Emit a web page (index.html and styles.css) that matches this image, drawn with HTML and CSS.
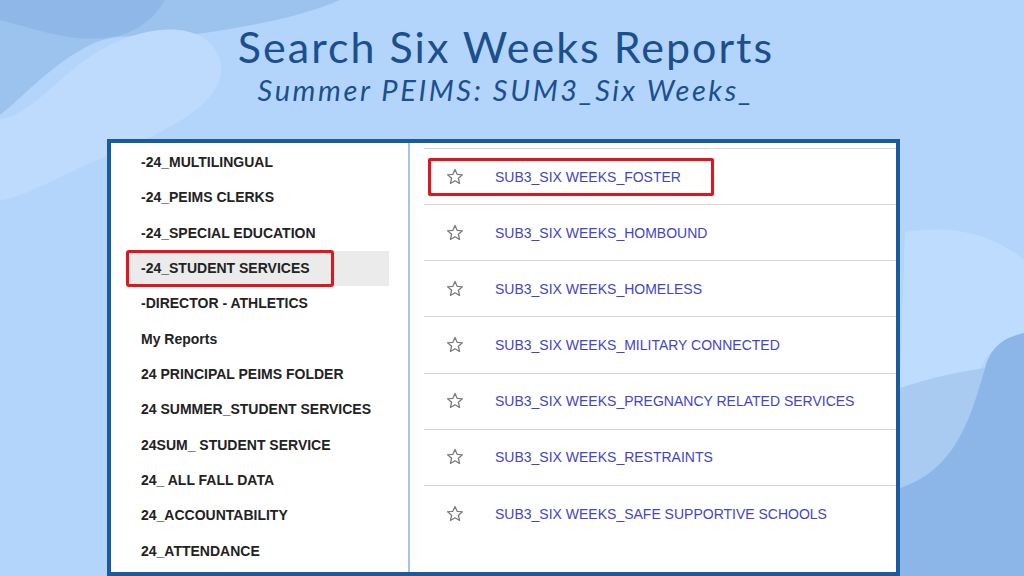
FILE: index.html
```html
<!DOCTYPE html>
<html>
<head>
<meta charset="utf-8">
<link rel="stylesheet" href="styles.css">
</head>
<body>
<div class="slide">
  <svg class="bg" viewBox="0 0 1024 576" preserveAspectRatio="none" aria-hidden="true">
    <rect width="1024" height="576" fill="#b4d5fb"/>
    <path d="M0 0 H340 C300 18 240 28 190 35 C150 40 120 30 90 45 C50 65 20 100 0 115 Z" fill="#9cc2ee"/>
    <path d="M0 0 H165 C150 25 130 35 105 38 C70 42 40 30 0 20 Z" fill="#8fb8e8"/>
    <path d="M0 120 C40 110 60 70 110 45 C160 20 210 25 220 60 C230 100 170 130 120 150 C70 170 20 200 0 200 Z" fill="#bedbfd"/>
    <path d="M905 232 C950 225 990 232 1024 260 V335 C1000 340 985 355 980 370 C950 372 925 380 900 388 Z" fill="#bedcfd"/>
    <path d="M900 388 C925 380 955 372 985 368 C970 420 955 470 900 488 Z" fill="#a9cbf2"/>
    <path d="M1024 333 C1000 338 990 350 985 368 C970 420 955 470 900 488 V576 H1024 Z" fill="#8db6e8"/>
  </svg>
  <header class="head">
    <h1 class="title">Search Six Weeks Reports</h1>
    <p class="subtitle">Summer PEIMS: SUM3_Six Weeks_</p>
  </header>
  <div class="panel">
    <div class="folders">
      <div class="folder">-24_MULTILINGUAL</div>
      <div class="folder">-24_PEIMS CLERKS</div>
      <div class="folder">-24_SPECIAL EDUCATION</div>
      <div class="folder selected">-24_STUDENT SERVICES</div>
      <div class="folder">-DIRECTOR - ATHLETICS</div>
      <div class="folder">My Reports</div>
      <div class="folder">24 PRINCIPAL PEIMS FOLDER</div>
      <div class="folder">24 SUMMER_STUDENT SERVICES</div>
      <div class="folder">24SUM_ STUDENT SERVICE</div>
      <div class="folder">24_ ALL FALL DATA</div>
      <div class="folder">24_ACCOUNTABILITY</div>
      <div class="folder">24_ATTENDANCE</div>
    </div>
    <div class="divider"></div>
    <div class="reports">
      <div class="report highlighted"><svg class="star" viewBox="0 0 16 16"><path d="M8 1.3 L9.9 5.6 L14.6 6 L11 9.1 L12.1 13.7 L8 11.3 L3.9 13.7 L5 9.1 L1.4 6 L6.1 5.6 Z"/></svg><span class="name">SUB3_SIX WEEKS_FOSTER</span></div>
      <div class="report"><svg class="star" viewBox="0 0 16 16"><path d="M8 1.3 L9.9 5.6 L14.6 6 L11 9.1 L12.1 13.7 L8 11.3 L3.9 13.7 L5 9.1 L1.4 6 L6.1 5.6 Z"/></svg><span class="name">SUB3_SIX WEEKS_HOMBOUND</span></div>
      <div class="report"><svg class="star" viewBox="0 0 16 16"><path d="M8 1.3 L9.9 5.6 L14.6 6 L11 9.1 L12.1 13.7 L8 11.3 L3.9 13.7 L5 9.1 L1.4 6 L6.1 5.6 Z"/></svg><span class="name">SUB3_SIX WEEKS_HOMELESS</span></div>
      <div class="report"><svg class="star" viewBox="0 0 16 16"><path d="M8 1.3 L9.9 5.6 L14.6 6 L11 9.1 L12.1 13.7 L8 11.3 L3.9 13.7 L5 9.1 L1.4 6 L6.1 5.6 Z"/></svg><span class="name">SUB3_SIX WEEKS_MILITARY CONNECTED</span></div>
      <div class="report"><svg class="star" viewBox="0 0 16 16"><path d="M8 1.3 L9.9 5.6 L14.6 6 L11 9.1 L12.1 13.7 L8 11.3 L3.9 13.7 L5 9.1 L1.4 6 L6.1 5.6 Z"/></svg><span class="name">SUB3_SIX WEEKS_PREGNANCY RELATED SERVICES</span></div>
      <div class="report"><svg class="star" viewBox="0 0 16 16"><path d="M8 1.3 L9.9 5.6 L14.6 6 L11 9.1 L12.1 13.7 L8 11.3 L3.9 13.7 L5 9.1 L1.4 6 L6.1 5.6 Z"/></svg><span class="name">SUB3_SIX WEEKS_RESTRAINTS</span></div>
      <div class="report last"><svg class="star" viewBox="0 0 16 16"><path d="M8 1.3 L9.9 5.6 L14.6 6 L11 9.1 L12.1 13.7 L8 11.3 L3.9 13.7 L5 9.1 L1.4 6 L6.1 5.6 Z"/></svg><span class="name">SUB3_SIX WEEKS_SAFE SUPPORTIVE SCHOOLS</span></div>
    </div>
  </div>
</div>
</body>
</html>
```

FILE: styles.css
```css
*, *::before, *::after { box-sizing: border-box; }
html, body { margin: 0; padding: 0; }
body { width: 1024px; height: 576px; overflow: hidden; background: #b4d5fb; }

.slide {
  position: relative;
  width: 1024px;
  height: 576px;
  overflow: hidden;
}

.bg {
  position: absolute;
  left: 0;
  top: 0;
  width: 1024px;
  height: 576px;
  z-index: 0;
}

.head {
  position: relative;
  z-index: 1;
  height: 139px;
  padding-top: 22px;
  padding-right: 12px;
  text-align: center;
  color: #1b4f8f;
  font-family: Lato, "Noto Sans", sans-serif;
}

.title {
  margin: 0;
  font-size: 43px;
  font-weight: 400;
  line-height: 50px;
  letter-spacing: 2px;
}

.subtitle {
  margin: 0;
  font-size: 29px;
  font-style: italic;
  line-height: 36px;
  letter-spacing: 2.6px;
}

.panel {
  position: relative;
  z-index: 1;
  margin-left: 107px;
  width: 793px;
  height: 437px;
  border: 4px solid #1a5a9e;
  background: #ffffff;
  display: flex;
}

.folders {
  width: 297px;
  padding-top: 2px;
  padding-left: 16px;
  font-family: "Liberation Sans", Arial, sans-serif;
  font-weight: 700;
  font-size: 14px;
  color: #222222;
}

.folder {
  position: relative;
  width: 262px;
  height: 35.35px;
  line-height: 35.35px;
  padding-left: 14px;
  white-space: nowrap;
}

.folder.selected { background: #ebebeb; }

.folder.selected::after {
  content: "";
  position: absolute;
  left: -1px;
  top: -1px;
  width: 208px;
  height: 37px;
  border: 3px solid #e3141c;
  border-radius: 3px;
}

.divider {
  width: 2px;
  background: #a7c4e4;
}

.reports {
  flex: 1;
  padding-top: 5px;
  padding-left: 14px;
  font-family: "Liberation Sans", Arial, sans-serif;
  font-size: 14px;
  color: #4444c8;
}

.report {
  position: relative;
  height: 56.17px;
  display: flex;
  align-items: center;
  padding-left: 22px;
  border-top: 1px solid #d6d6d6;
  white-space: nowrap;
}

.report.highlighted::after {
  content: "";
  position: absolute;
  left: 4px;
  top: 9px;
  width: 286px;
  height: 38px;
  border: 3px solid #e3141c;
  border-radius: 2px;
}

.star {
  width: 18px;
  height: 18px;
  margin-right: 31px;
  fill: none;
  stroke: #7a7a7a;
  stroke-width: 1.1;
  stroke-linejoin: round;
}
```
